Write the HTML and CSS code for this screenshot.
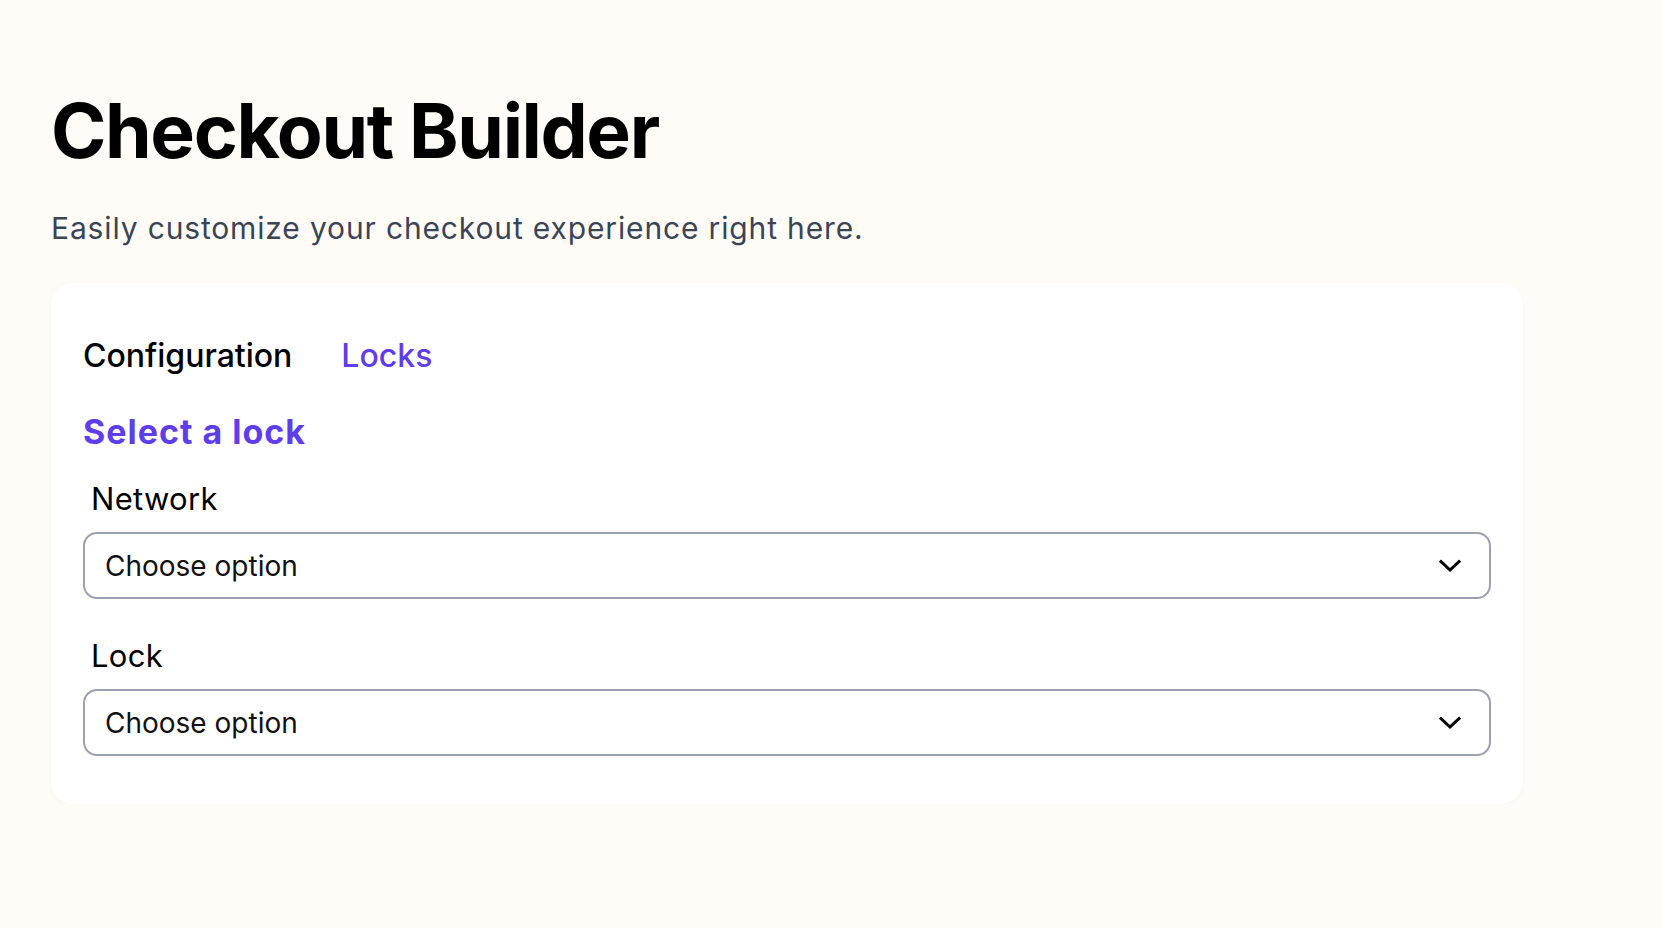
FILE: index.html
```html
<!DOCTYPE html>
<html lang="en">
<head>
<meta charset="utf-8">
<title>Checkout Builder</title>
<link rel="stylesheet" href="styles.css">
</head>
<body>
<main class="page">
  <h1 class="title">Checkout Builder</h1>
  <p class="subtitle">Easily customize your checkout experience right here.</p>
  <section class="card">
    <nav class="tabs">
      <span class="tab tab-active">Configuration</span>
      <span class="tab tab-link">Locks</span>
    </nav>
    <h2 class="heading">Select a lock</h2>
    <div class="field">
      <label class="label">Network</label>
      <div class="select">
        <span class="select-text">Choose option</span>
        <svg class="chevron" width="22" height="14" viewBox="0 0 22 14"><path d="M2 2.5 L11 11 L20 2.5" fill="none" stroke="#000" stroke-width="3" stroke-linecap="square"/></svg>
      </div>
    </div>
    <div class="field">
      <label class="label">Lock</label>
      <div class="select">
        <span class="select-text">Choose option</span>
        <svg class="chevron" width="22" height="14" viewBox="0 0 22 14"><path d="M2 2.5 L11 11 L20 2.5" fill="none" stroke="#000" stroke-width="3" stroke-linecap="square"/></svg>
      </div>
    </div>
  </section>
</main>
</body>
</html>
```
FILE: styles.css
```css
* { box-sizing: border-box; }
html, body { margin: 0; padding: 0; }
body {
  background: #fffcf7;
  font-family: Inter, "Noto Sans", sans-serif;
  color: #000;
}
.page {
  padding: 93px 0 0 51px;
  width: 1523px;
  display: flex;
  flex-direction: column;
}
.title {
  margin: 0;
  font-size: 75px;
  line-height: 1;
  font-weight: 700;
  letter-spacing: -1.4px;
}
.subtitle {
  margin: 39px 0 0;
  font-size: 30px;
  line-height: 43px;
  letter-spacing: 0.85px;
  color: #3b4455;
}
.card {
  margin-top: 33px;
  background: #fff;
  border-radius: 22px;
  padding: 49px 32px 48px;
  box-shadow: 0 1px 4px rgba(120, 100, 60, 0.05);
  display: flex;
  flex-direction: column;
}
.tabs {
  display: flex;
  gap: 49px;
}
.tab {
  font-size: 32px;
  line-height: 48px;
  font-weight: 500;
}
.tab-link { color: #603deb; }
.heading {
  margin: 31px 0 0;
  font-size: 34px;
  line-height: 42px;
  font-weight: 700;
  letter-spacing: 1px;
  color: #603deb;
}
.field {
  display: flex;
  flex-direction: column;
  gap: 10px;
  margin-top: 23px;
}
.field + .field { margin-top: 34px; }
.label {
  padding-left: 8px;
  font-size: 31px;
  line-height: 46px;
  letter-spacing: 0.3px;
}
.select {
  height: 67px;
  border: 2px solid #9ca1b2;
  border-radius: 14px;
  display: flex;
  align-items: center;
  justify-content: space-between;
  padding: 0 28px 0 20px;
}
.select-text {
  font-size: 28px;
  color: #111;
}
.chevron { display: block; }
```
